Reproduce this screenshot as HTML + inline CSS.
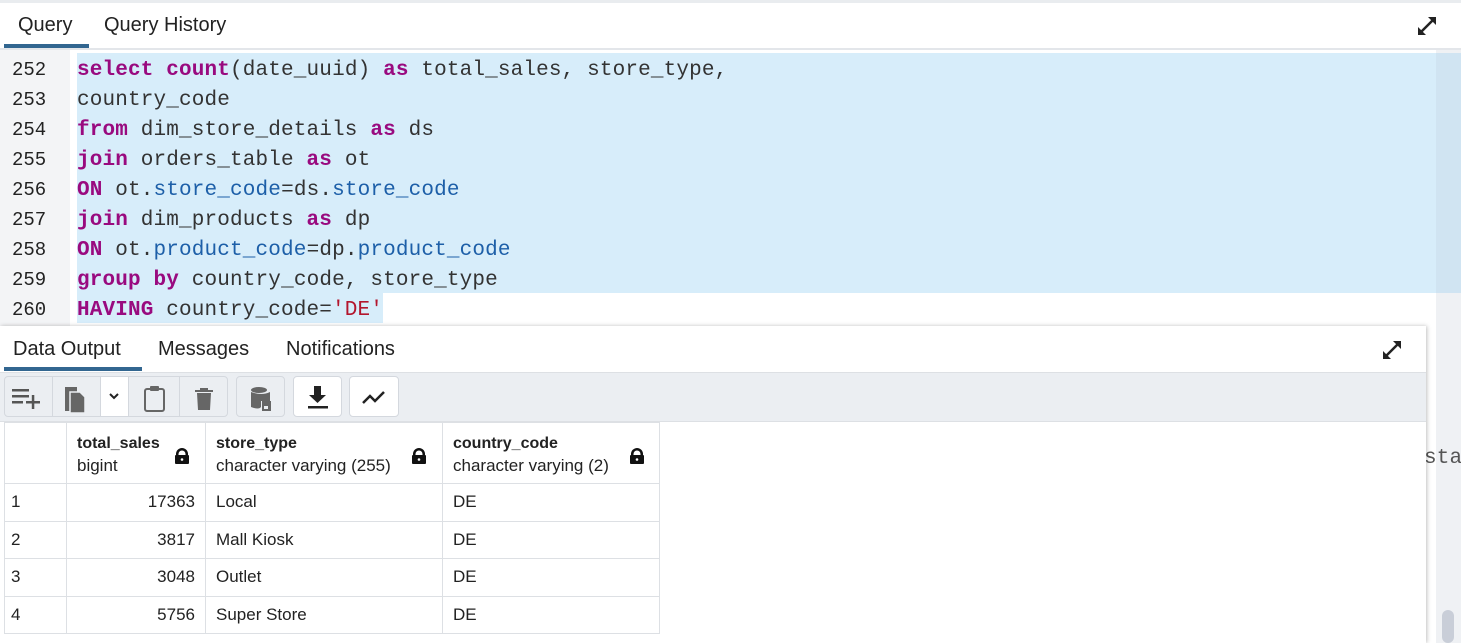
<!DOCTYPE html><html><head><style>
*{margin:0;padding:0;box-sizing:border-box}
body{width:1461px;height:643px;overflow:hidden;background:#fff;font-family:"Liberation Sans",sans-serif;position:relative;color:#222}
.abs{position:absolute}
.tab{position:absolute;font-size:20px;color:#222}
.code{position:absolute;left:77px;font-family:"Liberation Mono",monospace;font-size:21px;letter-spacing:0.15px;color:#333;white-space:pre;line-height:30px}
.ln{position:absolute;left:12px;font-family:"Liberation Mono",monospace;font-size:19px;color:#222;line-height:30px}
.k{color:#990a7f;font-weight:bold}.p{color:#1d5fa8}.s{color:#b3162d}
.btn{position:absolute;top:376px;height:41px;border:1px solid #d4d8de;background:#ebeef2;border-radius:4px}
table{position:absolute;left:4px;top:422px;border-collapse:collapse;font-size:17px;color:#222}
td{border:1px solid #dde0e4;height:37.5px;padding:0 10px}
</style></head><body>
<div class="abs" style="left:0;top:0;width:1461px;height:3px;background:#e9ecef"></div>
<div class="abs" style="left:0;top:48px;width:1461px;height:2px;background:#e3e6ea"></div>
<div class="tab" style="left:18px;top:14px">Query</div>
<div class="tab" style="left:104px;top:14px">Query History</div>
<div class="abs" style="left:4px;top:44px;width:85px;height:4px;background:#326690"></div>
<svg class="abs" style="left:1416px;top:15px" width="22" height="22" viewBox="0 0 22 22"><path d="M3 19L19 3" stroke="#222" stroke-width="2.5"/><path d="M2 20V12L10 20Z M20 2V10L12 2Z" fill="#222"/></svg>
<div class="abs" style="left:0;top:50px;width:70px;height:276px;background:#f3f4f6"></div>
<div class="abs" style="left:1436px;top:50px;width:25px;height:593px;background:#eff1f4"></div>
<div class="abs" style="left:77px;top:53px;width:1359px;height:240px;background:#d7edfa"></div>
<div class="abs" style="left:1436px;top:53px;width:25px;height:240px;background:#d0e4f2"></div>
<div class="abs" style="left:77px;top:293px;width:306px;height:30px;background:#d7edfa"></div>
<div class="ln" style="top:55px">252<br>253<br>254<br>255<br>256<br>257<br>258<br>259<br>260</div>
<div class="code" style="top:56px"><span class="k">select</span> <span class="k">count</span>(date_uuid) <span class="k">as</span> total_sales, store_type,
country_code
<span class="k">from</span> dim_store_details <span class="k">as</span> ds
<span class="k">join</span> orders_table <span class="k">as</span> ot
<span class="k">ON</span> ot.<span class="p">store_code</span>=ds.<span class="p">store_code</span>
<span class="k">join</span> dim_products <span class="k">as</span> dp
<span class="k">ON</span> ot.<span class="p">product_code</span>=dp.<span class="p">product_code</span>
<span class="k">group</span> <span class="k">by</span> country_code, store_type
<span class="k">HAVING</span> country_code=<span class="s">'DE'</span></div>
<div class="code" style="left:1424px;top:444px;color:#555">sta</div>
<div class="abs" style="left:0;top:326px;width:1426px;height:317px;background:#fff;box-shadow:1px 0 4px rgba(0,0,0,.25)"></div>
<div class="tab" style="left:13px;top:338px">Data Output</div>
<div class="tab" style="left:158px;top:338px">Messages</div>
<div class="tab" style="left:286px;top:338px">Notifications</div>
<div class="abs" style="left:4px;top:367px;width:138px;height:4px;background:#326690"></div>
<svg class="abs" style="left:1381px;top:339px" width="22" height="22" viewBox="0 0 22 22"><path d="M3 19L19 3" stroke="#222" stroke-width="2.5"/><path d="M2 20V12L10 20Z M20 2V10L12 2Z" fill="#222"/></svg>
<div class="abs" style="left:0;top:372px;width:1426px;height:50px;background:#ebeef2;border-top:1px solid #dde0e4;border-bottom:1px solid #dde0e4"></div>
<div class="btn" style="left:4px;width:224px"></div>
<div class="abs" style="left:52px;top:377px;width:1px;height:39px;background:#d4d8de"></div>
<div class="abs" style="left:100px;top:377px;width:29px;height:39px;background:#fff;border-left:1px solid #d4d8de;border-right:1px solid #d4d8de"></div>
<div class="abs" style="left:179px;top:377px;width:1px;height:39px;background:#d4d8de"></div>
<div class="btn" style="left:236px;width:49px"></div>
<div class="btn" style="left:293px;width:49px;background:#fff"></div>
<div class="btn" style="left:349px;width:50px;background:#fff"></div>
<svg class="abs" style="left:0;top:372px" width="410" height="50">
<g fill="#555"><rect x="12" y="17" width="17" height="2.5"/><rect x="12" y="23" width="17" height="2.5"/><rect x="12" y="29" width="11" height="2.5"/><rect x="26" y="29" width="14" height="2.5"/><rect x="31.8" y="23" width="2.5" height="14"/></g>
<path d="M65 15h12v24h-12z" fill="#666"/><path d="M70 20h10l5 5v16h-15z" fill="#666" stroke="#ebeef2" stroke-width="1.5"/>
<path d="M110 22l4 4 4-4" fill="none" stroke="#222" stroke-width="2"/>
<rect x="145" y="17" width="19" height="22" rx="2" fill="none" stroke="#666" stroke-width="2"/><rect x="150" y="14" width="9" height="5" rx="1" fill="#666"/>
<path d="M195 18h18v2h-18z M197 21h14l-1 17h-12z M200 16h8v2h-8z" fill="#666"/>
<ellipse cx="259" cy="18" rx="8" ry="3" fill="#666"/><path d="M251 20v15q8 3 10 0v-6h9v-9q-8 4-19 0z" fill="#666"/><rect x="262" y="29" width="9" height="10" fill="#666"/><rect x="264" y="34" width="4" height="3" fill="#ebeef2"/>
<path d="M314 14h7v9h5l-8.5 8-8.5-8h5z" fill="#222"/><rect x="308" y="34" width="20" height="2.5" fill="#222"/>
<path d="M363 31l7-7 5 5 9-9" fill="none" stroke="#222" stroke-width="2.5"/>
</svg>
<table>
<tr style="height:61px"><td style="width:62px"></td>
<td style="width:139px"><b style="font-weight:600;font-size:16px">total_sales</b><br><span style="position:relative;top:3px">bigint</span></td>
<td style="width:237px"><b style="font-weight:600;font-size:16px">store_type</b><br><span style="position:relative;top:3px">character varying (255)</span></td>
<td style="width:217px"><b style="font-weight:600;font-size:16px">country_code</b><br><span style="position:relative;top:3px">character varying (2)</span></td></tr>
<tr><td style="padding-left:6px">1</td><td style="text-align:right">17363</td><td>Local</td><td>DE</td></tr>
<tr><td style="padding-left:6px">2</td><td style="text-align:right">3817</td><td>Mall Kiosk</td><td>DE</td></tr>
<tr><td style="padding-left:6px">3</td><td style="text-align:right">3048</td><td>Outlet</td><td>DE</td></tr>
<tr><td style="padding-left:6px">4</td><td style="text-align:right">5756</td><td>Super Store</td><td>DE</td></tr>
</table>
<svg class="abs" style="left:0;top:440px" width="660" height="30"><g fill="#111"><path d="M176 14a6 6 0 0112 0v2h-2.5v-2a3.5 3.5 0 00-7 0v2H176z"/><rect x="175" y="15" width="14" height="9" rx="1"/><path d="M413 14a6 6 0 0112 0v2h-2.5v-2a3.5 3.5 0 00-7 0v2H413z"/><rect x="412" y="15" width="14" height="9" rx="1"/><path d="M631 14a6 6 0 0112 0v2h-2.5v-2a3.5 3.5 0 00-7 0v2H631z"/><rect x="630" y="15" width="14" height="9" rx="1"/></g><g fill="#fff"><circle cx="182" cy="19.5" r="1.3"/><circle cx="419" cy="19.5" r="1.3"/><circle cx="637" cy="19.5" r="1.3"/></g></svg>
<div class="abs" style="left:1442px;top:610px;width:12px;height:33px;border-radius:6px;background:#c9ced8"></div>
</body></html>
